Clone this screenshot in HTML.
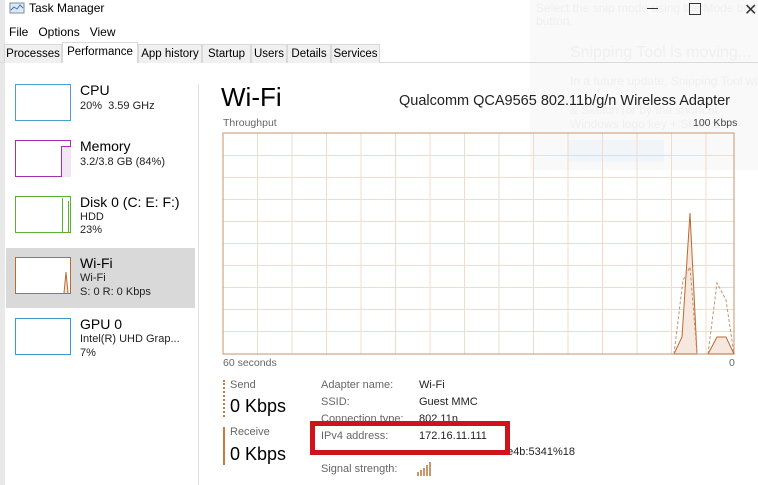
<!DOCTYPE html>
<html><head><meta charset="utf-8"><style>
body{margin:0;width:758px;height:485px;overflow:hidden;background:#fff;font-family:"Liberation Sans",sans-serif;position:relative;color:#000}
.a{position:absolute;white-space:nowrap}
.tab{position:absolute;top:44px;height:19px;font-size:11.5px;line-height:19px;text-align:center;background:#f0f0f0;border:1px solid #d9d9d9;border-bottom:none;box-sizing:border-box}
.thumb{position:absolute;left:15px;width:56px;height:37px;box-sizing:border-box;background:#fff}
.t1{font-size:14px}.t2{font-size:11px;color:#222}
.lbl{font-size:11px;color:#666}.val{font-size:11px;color:#222}
.ov{color:#efefef}
</style></head><body>
<div class="a" style="left:0;top:0;width:5px;height:485px;background:#e8e8e8"></div>
<svg class="a" style="left:9px;top:2px" width="16" height="13"><rect x="1" y="1" width="14" height="10" fill="#dfe9f3" stroke="#7a8fa6"/><path d="M2 8 L5 5 L8 7 L11 3 L14 6" stroke="#3a78c0" fill="none"/></svg>
<div class="a" style="left:29px;top:1px;font-size:12px">Task Manager</div>
<div class="a" style="left:9px;top:25px;font-size:12px">File&nbsp;&nbsp;&nbsp;Options&nbsp;&nbsp;&nbsp;View</div>
<div class="a" style="left:530px;top:0;width:228px;height:170px;background:rgba(244,244,244,0.5)"></div>
<div class="a ov" style="left:536px;top:1px;font-size:12px">Select the snip mode using the Mode button or</div>
<div class="a ov" style="left:536px;top:14px;font-size:12px">button.</div>
<div class="a ov" style="left:570px;top:44px;font-size:16px">Snipping Tool is moving...</div>
<div class="a ov" style="left:570px;top:74px;font-size:12px">In a future update, Snipping Tool will be</div>
<div class="a ov" style="left:570px;top:103px;font-size:12px">&amp; Sketch (or by the shortcut</div>
<div class="a ov" style="left:570px;top:117px;font-size:12px">Windows logo key + Shift+S</div>
<div class="a" style="left:568px;top:140px;width:96px;height:22px;background:#f2f5f8"></div>
<div class="a" style="left:744px;top:0;font-size:16px;color:#333">✕</div>
<div class="a" style="left:689px;top:3px;width:10px;height:10px;border:1px solid #333"></div>
<div class="a" style="left:647px;top:8px;width:11px;height:1px;background:#333"></div>
<div class="a" style="left:0;top:62px;width:758px;height:1px;background:#d9d9d9"></div>
<div class="tab" style="left:4px;width:58px">Processes</div>
<div class="tab" style="left:62px;width:76px;top:42px;height:21px;background:#fff">Performance</div>
<div class="tab" style="left:138px;width:64px">App history</div>
<div class="tab" style="left:202px;width:49px">Startup</div>
<div class="tab" style="left:251px;width:36px">Users</div>
<div class="tab" style="left:287px;width:44px">Details</div>
<div class="tab" style="left:331px;width:49px">Services</div>
<div class="a" style="left:198px;top:84px;width:1px;height:401px;background:#e0e0e0"></div>
<div class="thumb" style="top:84px;border:1px solid #4a9fd0"></div>
<div class="a t1" style="left:80px;top:82px">CPU</div><div class="a t2" style="left:80px;top:100px">20%&nbsp; 3.59 GHz</div>
<div class="thumb" style="top:140px;border:1px solid #a030b0"><div class="a" style="left:45px;top:5px;width:9px;height:30px;background:#f2e6f4;border-left:1px solid #a030b0;border-top:1px solid #a030b0"></div></div>
<div class="a t1" style="left:80px;top:138px">Memory</div><div class="a t2" style="left:80px;top:156px">3.2/3.8 GB (84%)</div>
<div class="thumb" style="top:196px;border:1px solid #5cb030"><div class="a" style="left:46px;top:1px;width:1px;height:35px;background:#5cb030"></div><div class="a" style="left:52px;top:4px;width:1px;height:32px;background:#5cb030"></div></div>
<div class="a t1" style="left:80px;top:194px">Disk 0 (C: E: F:)</div><div class="a t2" style="left:80px;top:211px">HDD</div><div class="a t2" style="left:80px;top:224px">23%</div>
<div class="a" style="left:6px;top:248px;width:189px;height:60px;background:#d9d9d9"></div>
<div class="thumb" style="top:257px;border:1px solid #b86a30"><svg class="a" style="left:0;top:0" width="54" height="35"><path d="M48 35 L50 14 L52 35" stroke="#b86a30" fill="#f4e4d8"/></svg></div>
<div class="a t1" style="left:80px;top:255px">Wi-Fi</div><div class="a t2" style="left:80px;top:272px">Wi-Fi</div><div class="a t2" style="left:80px;top:286px">S: 0 R: 0 Kbps</div>
<div class="thumb" style="top:318px;border:1px solid #3d9ac8"></div>
<div class="a t1" style="left:80px;top:316px">GPU 0</div><div class="a t2" style="left:80px;top:333px">Intel(R) UHD Grap...</div><div class="a t2" style="left:80px;top:347px">7%</div>
<div class="a" style="left:221px;top:82px;font-size:26px">Wi-Fi</div>
<div class="a" style="left:399px;top:93px;font-size:14.5px;color:#222">Qualcomm QCA9565 802.11b/g/n Wireless Adapter</div>
<div class="a" style="left:223px;top:117px;font-size:10.5px;color:#666">Throughput</div>
<div class="a" style="left:693px;top:117px;font-size:10.5px;color:#444">100 Kbps</div>
<svg class="a" style="left:222px;top:132px" width="514" height="224">
<g stroke="#f0dccc" stroke-width="1">
<path d="M35.5 1V222M70 1V222M104.5 1V222M139 1V222M173.5 1V222M208 1V222M242.5 1V222M277 1V222M311.5 1V222M346 1V222M380.5 1V222M415 1V222M449.5 1V222M484 1V222"/>
<path d="M1 23.5H512M1 45.5H512M1 67.5H512M1 89.5H512M1 111.5H512M1 133.5H512M1 155.5H512M1 177.5H512M1 199.5H512"/>
</g>
<rect x="1" y="1" width="511" height="221" fill="none" stroke="#c8966a"/>
<path d="M452 222 L460 205 L468 81 L475 222Z M486 222 L495 205 L504 205 L512 222Z" fill="#f6e8de" stroke="#b86a30"/>
<path d="M452 222 L461 148 L468 135 L475 222 M486 222 L495 151 L504 168 L512 222" fill="none" stroke="#c8906a" stroke-dasharray="3,2"/>
</svg>
<div class="a" style="left:223px;top:357px;font-size:10.5px;color:#666">60 seconds</div>
<div class="a" style="left:729px;top:357px;font-size:10.5px;color:#666">0</div>
<div class="a" style="left:223px;top:380px;width:0;height:37px;border-left:2px dotted #c87a40"></div>
<div class="a" style="left:230px;top:379px;font-size:11px;color:#666">Send</div>
<div class="a" style="left:230px;top:396px;font-size:18px">0 Kbps</div>
<div class="a" style="left:223px;top:427px;width:2px;height:38px;background:#c87a40"></div>
<div class="a" style="left:230px;top:426px;font-size:11px;color:#666">Receive</div>
<div class="a" style="left:230px;top:444px;font-size:18px">0 Kbps</div>
<div class="a lbl" style="left:321px;top:379px">Adapter name:</div><div class="a val" style="left:419px;top:379px">Wi-Fi</div>
<div class="a lbl" style="left:321px;top:396px">SSID:</div><div class="a val" style="left:419px;top:396px">Guest MMC</div>
<div class="a lbl" style="left:321px;top:413px">Connection type:</div><div class="a val" style="left:419px;top:413px">802.11n</div>
<div class="a lbl" style="left:321px;top:446px">IPv6 address:</div><div class="a val" style="left:419px;top:446px">fe80::4151:b57c:2e4b:5341%18</div>
<div class="a lbl" style="left:321px;top:463px">Signal strength:</div>
<svg class="a" style="left:417px;top:462px" width="16" height="14"><g fill="#c8966a"><rect x="0" y="10" width="2" height="4"/><rect x="3" y="8" width="2" height="6"/><rect x="6" y="6" width="2" height="8"/><rect x="9" y="3" width="2" height="11"/><rect x="12" y="0" width="2" height="14"/></g></svg>
<div class="a" style="left:310px;top:421px;width:190px;height:24px;border:5px solid #d0121b;background:#fff"></div>
<div class="a lbl" style="left:321px;top:430px">IPv4 address:</div><div class="a val" style="left:419px;top:430px">172.16.11.111</div>
</body></html>
